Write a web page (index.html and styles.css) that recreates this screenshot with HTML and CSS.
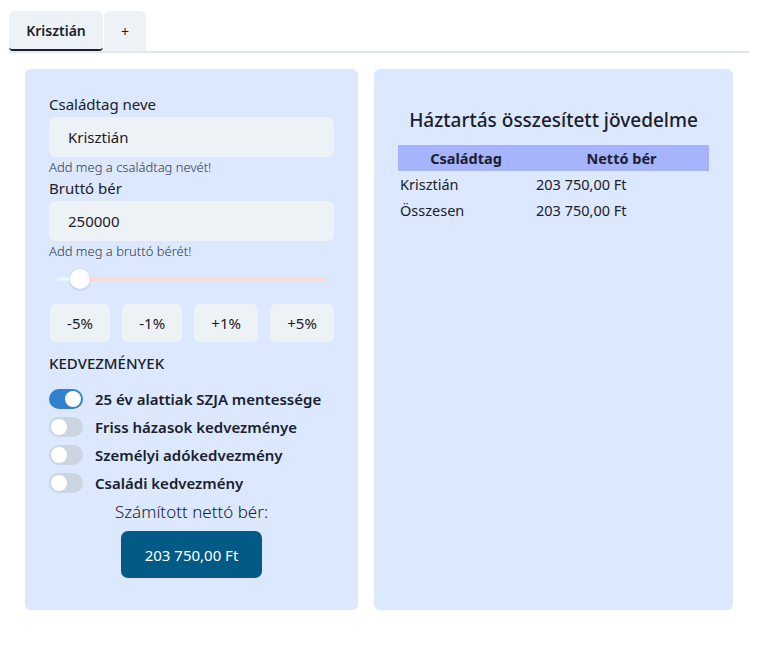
FILE: index.html
```html
<!DOCTYPE html>
<html lang="hu">
<head>
<meta charset="utf-8">
<title>Háztartás</title>
<link rel="stylesheet" href="styles.css">
</head>
<body>
<div class="app">
  <div class="tabs">
    <div class="tab active">Krisztián</div>
    <div class="tab plus">+</div>
  </div>
  <div class="main">
    <section class="card left">
      <label class="label">Családtag neve</label>
      <div class="input">Krisztián</div>
      <div class="help">Add meg a családtag nevét!</div>
      <label class="label">Bruttó bér</label>
      <div class="input">250000</div>
      <div class="help">Add meg a bruttó bérét!</div>
      <div class="slider">
        <div class="track"><div class="filled"></div></div>
        <div class="thumb"></div>
      </div>
      <div class="btns">
        <div class="btn">-5%</div>
        <div class="btn">-1%</div>
        <div class="btn">+1%</div>
        <div class="btn">+5%</div>
      </div>
      <h3 class="section">KEDVEZMÉNYEK</h3>
      <div class="switches">
        <div class="sw-row"><span class="switch on"><span class="knob"></span></span><span class="sw-label">25 év alattiak SZJA mentessége</span></div>
        <div class="sw-row"><span class="switch"><span class="knob"></span></span><span class="sw-label">Friss házasok kedvezménye</span></div>
        <div class="sw-row"><span class="switch"><span class="knob"></span></span><span class="sw-label">Személyi adókedvezmény</span></div>
        <div class="sw-row"><span class="switch"><span class="knob"></span></span><span class="sw-label">Családi kedvezmény</span></div>
      </div>
      <div class="result">
        <div class="result-label">Számított nettó bér:</div>
        <div class="result-btn">203 750,00 Ft</div>
      </div>
    </section>
    <section class="card right">
      <h2 class="title">Háztartás összesített jövedelme</h2>
      <table class="tbl">
        <thead><tr><th class="c1">Családtag</th><th>Nettó bér</th></tr></thead>
        <tbody>
          <tr><td>Krisztián</td><td>203 750,00 Ft</td></tr>
          <tr><td>Összesen</td><td>203 750,00 Ft</td></tr>
        </tbody>
      </table>
    </section>
  </div>
</div>
</body>
</html>
```

FILE: styles.css
```css
* { box-sizing: border-box; }
body {
  margin: 0;
  font-family: "Noto Sans", "Open Sans", sans-serif;
  color: #1a202c;
  background: #fff;
}
.app { padding: 11px 23px 0 9px; }
.tabs {
  display: flex;
  gap: 1px;
  border-bottom: 2px solid #e2e8f0;
}
.tab {
  height: 40px;
  display: flex;
  align-items: center;
  justify-content: center;
  background: #edf2f7;
  border-radius: 6px 6px 0 0;
  font-size: 14px;
  font-weight: 600;
}
.tab.active {
  width: 94px;
  border-bottom: 2px solid #1a202c;
  border-radius: 6px 6px 4px 4px;
}
.tab.plus { width: 42px; font-weight: 400; }
.main {
  display: flex;
  gap: 16px;
  padding: 16px 0 0 16px;
}
.card {
  background: #dbe8fe;
  border-radius: 6px;
  height: 541px;
}
.left { width: 333px; padding: 24px 24px 0 24px; }
.right { width: 359px; padding: 37px 24px 0 24px; }
.label {
  display: block;
  font-size: 15px;
  line-height: 22px;
  margin-bottom: 2px;
}
.input {
  height: 40px;
  background: #edf2f7;
  border-radius: 6px;
  padding: 0 19px;
  display: flex;
  align-items: center;
  font-size: 15px;
}
.help {
  font-size: 13px;
  font-weight: 300;
  color: #2d3748;
  line-height: 20px;
}
.slider {
  position: relative;
  height: 20px;
  margin: 8px 8px 0 8px;
}
.track {
  position: absolute;
  left: 0; right: 0; top: 8px;
  height: 4px;
  border-radius: 2px;
  background: #fed7d7;
}
.filled {
  width: 23px;
  height: 4px;
  border-radius: 2px;
  background: #e6f6ff;
}
.thumb {
  position: absolute;
  left: 13px; top: 0;
  width: 20px; height: 20px;
  border-radius: 50%;
  background: #fff;
  box-shadow: 0 1px 3px rgba(0,0,0,0.15);
}
.btns {
  display: flex;
  gap: 12px;
  margin-top: 15px;
  padding-left: 1px;
}
.btn {
  flex: 1 1 auto;
  height: 38px;
  background: #edf2f7;
  border-radius: 6px;
  display: flex;
  align-items: center;
  justify-content: center;
  font-size: 15px;
  padding: 0 16px;
}
.section {
  margin: 10px 0 0 0;
  font-size: 15px;
  font-weight: 500;
  line-height: 22px;
}
.switches { margin-top: 11px; }
.sw-row {
  display: flex;
  align-items: center;
  gap: 12px;
  height: 28px;
}
.switch {
  width: 34px; height: 20px;
  border-radius: 10px;
  background: #cbd5e0;
  padding: 2px;
  display: flex;
}
.switch.on { background: #3182ce; justify-content: flex-end; }
.knob {
  width: 16px; height: 16px;
  border-radius: 50%;
  background: #fff;
}
.sw-label { font-size: 15px; font-weight: 600; }
.result {
  display: flex;
  flex-direction: column;
  align-items: center;
  margin-top: 2px;
}
.result-label { font-size: 17px; font-weight: 300; line-height: 26px; }
.result-btn {
  margin-top: 6px;
  width: 141px; height: 47px;
  background: #045a87;
  color: #fff;
  border-radius: 7px;
  display: flex;
  align-items: center;
  justify-content: center;
  font-size: 15px;
}
.title {
  margin: 0;
  text-align: center;
  font-size: 19px;
  font-weight: 500;
  line-height: 28px;
}
.tbl {
  margin-top: 11px;
  width: 311px;
  border-collapse: collapse;
  font-size: 14.5px;
}
.tbl th {
  background: #a5b4fc;
  font-weight: 700;
  height: 26px;
  padding: 0;
  text-align: center;
}
.tbl th.c1 { width: 136px; }
.tbl td { height: 26px; padding: 0 2px; }
```
